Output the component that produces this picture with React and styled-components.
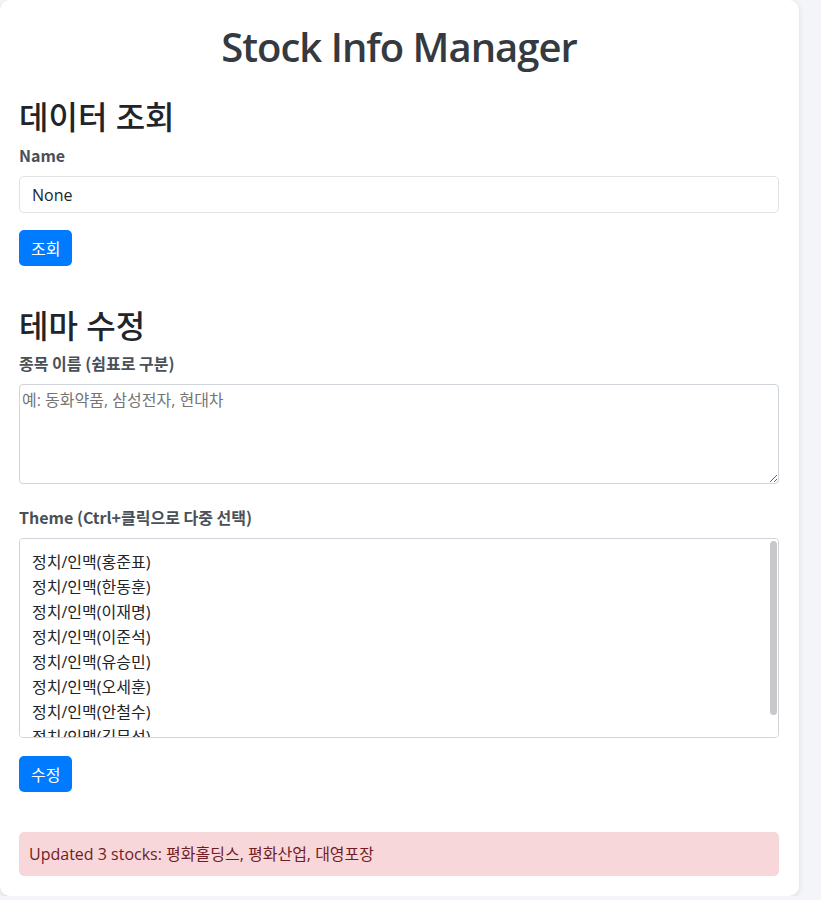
import React from "react";
import styled, { createGlobalStyle } from "styled-components";

const GlobalStyle = createGlobalStyle`
  body {
    margin: 0;
    background: #f4f5f8;
    font-family: "Segoe UI", "Open Sans", "Noto Sans CJK KR", sans-serif;
    color: #212529;
  }
`;

const Card = styled.main`
  box-sizing: border-box;
  width: 799px;
  padding: 0 20px 20px 19px;
  background: #fff;
  border-radius: 10px;
  box-shadow: 0 2px 6px rgba(0, 0, 0, 0.1);
`;

const Title = styled.h1`
  margin: 0;
  padding-top: 21px;
  font-size: 40px;
  font-weight: 600;
  letter-spacing: -1px;
  line-height: 52px;
  color: #343a40;
  text-align: center;
`;

const Section = styled.section`
  margin-top: ${(p) => p.$top || 0}px;
`;

const Heading = styled.h2`
  margin: 0 0 ${(p) => p.$gap || 8}px;
  font-size: 32px;
  font-weight: 500;
  line-height: 40px;
  color: #212529;
`;

const Field = styled.div`
  margin-bottom: ${(p) => p.$gap || 17}px;
`;

const Label = styled.label`
  display: block;
  margin-bottom: 11px;
  font-family: "Noto Sans CJK KR", "Open Sans", sans-serif;
  font-size: 16px;
  font-weight: 700;
  line-height: 20px;
  color: #495057;
`;

const Input = styled.input`
  box-sizing: border-box;
  display: block;
  width: 100%;
  height: 37px;
  padding: 0 12px;
  border: 1px solid #dfe2e6;
  border-radius: 5px;
  font: inherit;
  font-size: 16px;
  color: #212529;
`;

const TextArea = styled.textarea`
  box-sizing: border-box;
  display: block;
  width: 100%;
  height: 100px;
  padding: 4px 2px;
  border: 1px solid #ced4da;
  border-radius: 4px;
  font: inherit;
  font-size: 16px;
  line-height: 22px;

  &::placeholder {
    color: #757575;
  }
`;

const ListWrap = styled.div`
  position: relative;
`;

const Select = styled.select`
  box-sizing: border-box;
  display: block;
  width: 100%;
  height: 200px;
  padding: 10px 0 10px 12px;
  border: 1px solid #ced4da;
  border-radius: 4px;
  font: inherit;
  font-size: 16px;
  color: #212529;
  outline: none;

  option {
    padding: 0 0 1px;
  }
`;

const ScrollThumb = styled.div`
  position: absolute;
  top: 3px;
  right: 2px;
  width: 7px;
  height: 174px;
  border-radius: 4px;
  background: #c8c8c8;
  pointer-events: none;
`;

const Button = styled.button`
  display: block;
  height: 36px;
  padding: 0 12px;
  border: none;
  border-radius: 5px;
  background: #007bff;
  color: #fff;
  font: inherit;
  font-size: 16px;
`;

const Alert = styled.div`
  margin-top: 40px;
  padding: 11px 10px;
  border-radius: 5px;
  background: #f8d7da;
  color: #721c24;
  font-size: 16px;
  line-height: 22px;
`;

const themes = [
  "정치/인맥(홍준표)",
  "정치/인맥(한동훈)",
  "정치/인맥(이재명)",
  "정치/인맥(이준석)",
  "정치/인맥(유승민)",
  "정치/인맥(오세훈)",
  "정치/인맥(안철수)",
  "정치/인맥(김무성)",
];

export default function App() {
  return (
    <>
      <GlobalStyle />
      <Card>
        <Title>Stock Info Manager</Title>

        <Section $top={24}>
          <Heading>데이터 조회</Heading>
          <Field>
            <Label htmlFor="name">Name</Label>
            <Input id="name" defaultValue="None" />
          </Field>
          <Button>조회</Button>
        </Section>

        <Section $top={40}>
          <Heading $gap={7}>테마 수정</Heading>
          <Field $gap={23}>
            <Label htmlFor="stocks">종목 이름 (쉼표로 구분)</Label>
            <TextArea id="stocks" placeholder="예: 동화약품, 삼성전자, 현대차" />
          </Field>
          <Field $gap={18}>
            <Label htmlFor="theme">Theme (Ctrl+클릭으로 다중 선택)</Label>
            <ListWrap>
              <Select id="theme" multiple>
                {themes.map((t) => (
                  <option key={t}>{t}</option>
                ))}
              </Select>
              <ScrollThumb />
            </ListWrap>
          </Field>
          <Button>수정</Button>
        </Section>

        <Alert>Updated 3 stocks: 평화홀딩스, 평화산업, 대영포장</Alert>
      </Card>
    </>
  );
}
